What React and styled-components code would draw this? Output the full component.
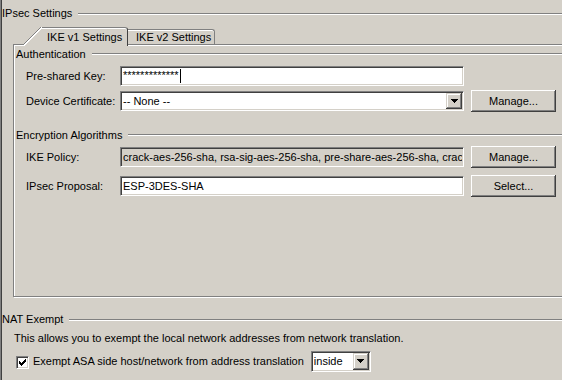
import React from 'react';
import styled, {createGlobalStyle, css} from 'styled-components';

const GlobalStyle = createGlobalStyle`
  html, body {
    margin: 0;
    padding: 0;
    background: #d4d0c8;
  }
  body {
    font-family: "Liberation Sans", Arial, sans-serif;
    font-size: 11px;
    color: #000;
  }
`;

const face = '#d4d0c8';

const sunken = css`
  box-sizing: border-box;
  border: 1px solid;
  border-color: #808080 #fff #fff #808080;
  box-shadow: inset 1px 1px #404040, inset -1px -1px ${face};
`;

const raised = css`
  background: ${face};
  box-shadow: inset -1px -1px #404040, inset 1px 1px #fff, inset -2px -2px #808080, inset 2px 2px ${face};
`;

const Page = styled.div`
  width: 562px;
  height: 380px;
  overflow: hidden;
  background: ${face};
`;

const Frame = styled.div`
  height: 100%;
  box-sizing: border-box;
  border-left: 1px solid #808080;
  box-shadow: inset 1px 0 #404040;
  padding: 6px 0 0 1px;
`;

const TitledRule = styled.div`
  display: flex;
  align-items: center;
  height: ${p => p.$h || 15}px;
  line-height: ${p => p.$h || 15}px;
  padding-left: ${p => p.$indent || 0}px;
  margin-top: ${p => p.$top || 0}px;
  white-space: nowrap;

  &::after {
    content: '';
    flex: 1;
    margin-left: 6px;
    border-top: 1px solid #808080;
    border-bottom: 1px solid #fff;
  }
`;

const TabStrip = styled.div`
  display: flex;
  align-items: flex-end;
  height: 17px;
  margin-top: 6px;
  padding-left: 21px;
`;

const SelectedTab = styled.div`
  position: relative;
  z-index: 1;
  display: flex;
  height: 19px;
  margin-bottom: -2px;
`;

const Slant = styled.span`
  width: 19px;
  height: 19px;
  background: linear-gradient(
    to bottom right,
    transparent calc(50% - 1px),
    #808080 calc(50% - 1px),
    #808080 50%,
    #fff 50%,
    #fff calc(50% + 1px),
    ${face} calc(50% + 1px)
  );
`;

const TabFace = styled.span`
  box-sizing: border-box;
  width: ${p => p.$w}px;
  height: ${p => p.$h}px;
  padding: ${p => p.$pt}px 0 0 ${p => p.$pl}px;
  line-height: 14px;
  background: ${face};
  border-top: 1px solid #808080;
  border-right: 1px solid ${p => (p.$active ? '#404040' : '#808080')};
  border-top-right-radius: 3px;
  box-shadow: inset 0 1px #fff;
  white-space: nowrap;
`;

const TabPanel = styled.div`
  box-sizing: border-box;
  height: 253px;
  margin: 0 -20px 0 11px;
  padding: 2px 0 0 2px;
  border: 1px solid #808080;
  box-shadow: inset 1px 1px #fff, 1px 1px #fff;
`;

const FormRow = styled.div`
  display: flex;
  align-items: center;
  height: ${p => p.$h}px;
  margin: ${p => p.$top}px 0 0 10px;
`;

const Label = styled.span`
  width: 94px;
  flex: none;
  white-space: nowrap;
`;

const Field = styled.div`
  ${sunken};
  display: flex;
  align-items: center;
  width: ${p => p.$w || 344}px;
  height: ${p => p.$h || 20}px;
  padding: 0 1px;
  overflow: hidden;
  background: ${p => (p.$readOnly ? face : '#fff')};
  flex: none;
`;

const FieldText = styled.span`
  flex: 1;
  min-width: 0;
  overflow: hidden;
  white-space: nowrap;
  padding-left: 1px;
`;

const Caret = styled.span`
  display: inline-block;
  width: 1px;
  height: 14px;
  margin-left: 1px;
  vertical-align: middle;
  background: #000;
`;

const ArrowButton = styled.span`
  display: flex;
  align-items: center;
  justify-content: center;
  width: 16px;
  height: ${p => p.$h || 16}px;
  flex: none;
  background: ${face};
  box-shadow: inset -1px -1px #404040, inset 1px 1px ${face}, inset -2px -2px #808080, inset 2px 2px #fff;
`;

const Button = styled.button`
  ${raised};
  width: 85px;
  height: 22px;
  margin-left: 7px;
  padding: 0;
  border: 0;
  font: inherit;
  color: #000;
  flex: none;
`;

const Note = styled.div`
  margin-top: 4px;
  padding-left: 12px;
  line-height: 14px;
  white-space: nowrap;
`;

const CheckRow = styled.div`
  display: flex;
  align-items: center;
  height: 22px;
  margin-top: 5px;
  padding-left: 14px;
`;

const CheckBox = styled.span`
  ${sunken};
  display: flex;
  align-items: center;
  justify-content: center;
  width: 13px;
  height: 13px;
  margin-top: 2px;
  background: #fff;
  flex: none;
`;

const CheckLabel = styled.span`
  margin: 0 7px 0 4px;
  white-space: nowrap;
`;

const DownArrow = () => (
  <svg width="7" height="4" shapeRendering="crispEdges">
    <path d="M0 0h7v1h-1v1h-1v1h-1v1h-1v-1h-1v-1h-1v-1h-1z" fill="#000" />
  </svg>
);

const CheckMark = () => (
  <svg width="7" height="7" shapeRendering="crispEdges">
    <path
      d="M0 2h1v3h-1zM1 3h1v3h-1zM2 4h1v3h-1zM3 3h1v3h-1zM4 2h1v3h-1zM5 1h1v3h-1zM6 0h1v3h-1z"
      fill="#000"
    />
  </svg>
);

// only the part of the list that fits the read-only field
const ikePolicies = 'crack-aes-256-sha, rsa-sig-aes-256-sha, pre-share-aes-256-sha, crac';

export default function App() {
  return (
    <Page>
      <GlobalStyle />
      <Frame>
        <TitledRule>IPsec Settings</TitledRule>

        <TabStrip>
          <SelectedTab>
            <Slant />
            <TabFace $active $w={86} $h={19} $pt={2} $pl={5}>IKE v1 Settings</TabFace>
          </SelectedTab>
          <TabFace $w={87} $h={15} $pt={0} $pl={8}>IKE v2 Settings</TabFace>
        </TabStrip>

        <TabPanel>
          <TitledRule $h={14}>Authentication</TitledRule>
          <FormRow $h={20} $top={5}>
            <Label>Pre-shared Key:</Label>
            <Field>
              <FieldText>
                *************<Caret />
              </FieldText>
            </Field>
          </FormRow>
          <FormRow $h={22} $top={4}>
            <Label>Device Certificate:</Label>
            <Field>
              <FieldText>-- None --</FieldText>
              <ArrowButton>
                <DownArrow />
              </ArrowButton>
            </Field>
            <Button>Manage...</Button>
          </FormRow>

          <TitledRule $h={14} $top={16}>Encryption Algorithms</TitledRule>
          <FormRow $h={22} $top={4}>
            <Label>IKE Policy:</Label>
            <Field $readOnly>
              <FieldText>{ikePolicies}</FieldText>
            </Field>
            <Button>Manage...</Button>
          </FormRow>
          <FormRow $h={22} $top={7}>
            <Label>IPsec Proposal:</Label>
            <Field>
              <FieldText>ESP-3DES-SHA</FieldText>
            </Field>
            <Button>Select...</Button>
          </FormRow>
        </TabPanel>

        <TitledRule $top={15}>NAT Exempt</TitledRule>
        <Note>This allows you to exempt the local network addresses from network translation.</Note>
        <CheckRow>
          <CheckBox>
            <CheckMark />
          </CheckBox>
          <CheckLabel>Exempt ASA side host/network from address translation</CheckLabel>
          <Field $w={60} $h={21}>
            <FieldText>inside</FieldText>
            <ArrowButton $h={17}>
              <DownArrow />
            </ArrowButton>
          </Field>
        </CheckRow>
      </Frame>
    </Page>
  );
}
